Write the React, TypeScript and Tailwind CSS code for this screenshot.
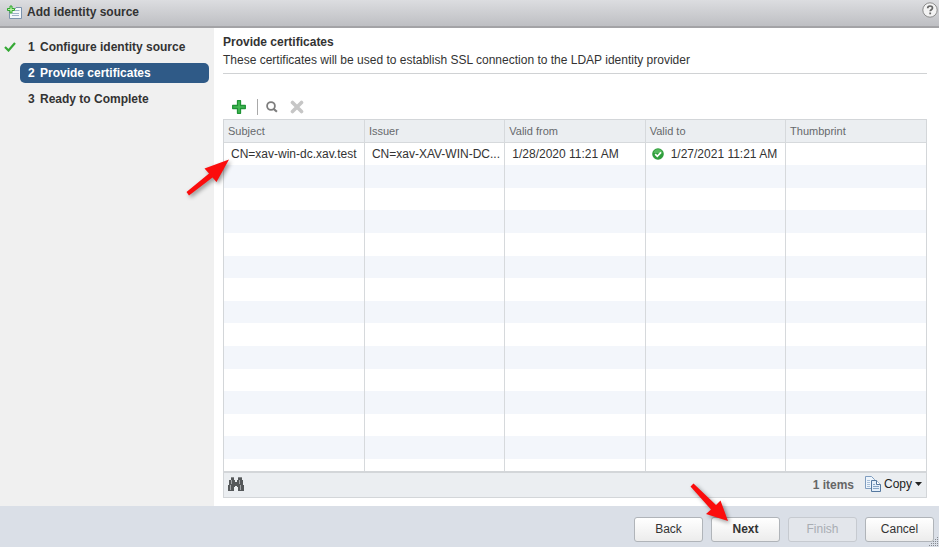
import React from "react";

const columns = ["Subject", "Issuer", "Valid from", "Valid to", "Thumbprint"];
const emptyRows = Array.from({ length: 13 }, (_, i) => i);

function AddSourceIcon() {
  return (
    <svg width="17" height="15" viewBox="0 0 17 15" aria-hidden="true">
      <path d="M3.5 4.500h5l1.500-2h5.500v11h-12z" fill="#f4f7fa" stroke="#7c93ad" />
      <path d="M9 5.500h4.500M6 8.500h7M6 10.500h7" stroke="#9fb2c8" />
      <path d="M4 1h2v2.500h2.500v2H6V8H4V5.500H1.500v-2H4z" fill="#b9f2a6" stroke="#2fa52f" />
    </svg>
  );
}

function HelpIcon() {
  return (
    <svg width="16" height="16" viewBox="0 0 16 16" aria-hidden="true">
      <circle cx="8" cy="8" r="7.200" fill="#f3f3f3" stroke="#8d8d8d" strokeWidth="1" />
      <path d="M5.700 6.300c0-3 4.800-3 4.800-.3 0 1.700-2.300 1.700-2.300 3.300" fill="none" stroke="#666" strokeWidth="1.700" />
      <path d="M7.300 10.500h1.800v1.800h-1.800z" fill="#666" />
    </svg>
  );
}

function PlusIcon() {
  return (
    <svg width="14" height="14" viewBox="0 0 14 14" aria-hidden="true">
      <path
        d="M5.500 .7h3v4.800h4.800v3H8.500v4.800h-3V8.500H.7v-3h4.800z"
        fill="#45b954"
        stroke="#1f9436"
        strokeWidth="1.300"
        strokeLinejoin="round"
      />
    </svg>
  );
}

function SearchIcon() {
  return (
    <svg width="12" height="12" viewBox="0 0 12 12" fill="none" stroke="#7d7d7d" aria-hidden="true">
      <circle cx="5" cy="5" r="3.900" strokeWidth="1.800" />
      <path d="M7.500 7.800l3.400 3" strokeWidth="2.200" />
    </svg>
  );
}

function RemoveIcon() {
  return (
    <svg width="14" height="14" viewBox="0 0 14 14" aria-hidden="true">
      <path d="M2.500 2.500l9 9M11.500 2.500l-9 9" stroke="#c6c6c6" strokeWidth="3.600" strokeLinecap="round" />
    </svg>
  );
}

function ValidIcon() {
  return (
    <svg width="12" height="12" viewBox="0 0 12 12" aria-hidden="true" className="shrink-0">
      <circle cx="6" cy="6" r="5.800" fill="#2f9e3c" />
      <path d="M1.500 5a4.600 4.600 0 0 1 9 0z" fill="#55b85c" />
      <path d="M3.200 6.100l2.100 2.200 3.700-4" fill="none" stroke="#fff" strokeWidth="1.700" />
    </svg>
  );
}

function BinocularsIcon() {
  return (
    <svg width="16" height="14" viewBox="0 0 16 14" aria-hidden="true">
      <path d="M3 0h3v3h1v2h2V3h1V0h4v3h1v5h1v6h-6v-4H9v-1H7v1H6v4H0V8h1V3h2z" fill="#55585a" />
      <path d="M3 3h1v4H3zM2 8h1v5H2zM11 3h1v4h-1zM12 8h1v5h-1z" fill="#a2a5a8" />
      <path d="M3 0h3v1H3zM10 0h4v1h-4z" fill="#85888a" />
    </svg>
  );
}

function CopyIcon() {
  return (
    <svg width="16" height="16" viewBox="0 0 16 16" aria-hidden="true">
      <path d="M.5 .5h6l3 3v9h-9z" fill="#eef5fc" stroke="#7f9dbf" />
      <path d="M2 4.500h3M2 6.500h3M2 8.500h3M2 10.500h3" stroke="#a8bfd8" />
      <path d="M6.500 4.500h5l4 4v7h-9z" fill="#e4effa" stroke="#55789f" />
      <path d="M11.500 4.500v4h4" fill="#fff" stroke="#55789f" />
      <path d="M8 8.500h2M8 10.500h6M8 12.500h6" stroke="#88a6c6" />
    </svg>
  );
}

function ResizeGrip() {
  return (
    <svg width="10" height="10" viewBox="0 0 10 10" fill="#85898f" aria-hidden="true" className="absolute right-0 bottom-0">
      <path d="M8 0h1v1H8zM6 2h1v1H6zM8 2h1v1H8zM4 4h1v1H4zM6 4h1v1H6zM8 4h1v1H8zM2 6h1v1H2zM4 6h1v1H4zM6 6h1v1H6zM8 6h1v1H8zM0 8h1v1H0zM2 8h1v1H2zM4 8h1v1H4zM6 8h1v1H6zM8 8h1v1H8z" />
    </svg>
  );
}

const footerButton =
  "h-[25px] w-[69px] rounded-[3px] border border-[#b0b4b9] bg-linear-to-b from-white to-[#ececec] text-[12px] text-[#333]";

export default function App() {
  return (
    <div className="flex min-h-screen flex-col bg-white font-['Liberation_Sans',Arial,sans-serif] text-[12px] leading-4 text-[#333]">
      <header className="flex h-7 items-start justify-between border-b-2 border-[#a3a3a6] bg-linear-to-b from-[#dcdde0] to-[#bebfc3] pr-px pl-[6px]">
        <div className="flex items-center gap-1 pt-1">
          <AddSourceIcon />
          <h1 className="font-bold">Add identity source</h1>
        </div>
        <button type="button" aria-label="Help" className="pt-[2px]">
          <HelpIcon />
        </button>
      </header>

      <div className="flex grow">
        <nav className="w-[214px] shrink-0 bg-[#f0f0f0] pt-[9px] font-bold" aria-label="Steps">
          <ol className="flex flex-col gap-[6px]">
            <li className="flex h-5 items-center pl-1">
              <svg width="12" height="10" viewBox="0 0 12 10" aria-hidden="true">
                <path d="M1 5l3.500 3.500L11 1" fill="none" stroke="#35a935" strokeWidth="2.200" />
              </svg>
              <a href="#configure" className="flex pl-3">
                <span className="w-3">1</span>
                <span>Configure identity source</span>
              </a>
            </li>
            <li className="mr-[5px] ml-5">
              <a href="#certificates" aria-current="step" className="flex h-5 items-center rounded-[5px] bg-[#2f5a87] pl-2 text-white">
                <span className="w-3">2</span>
                <span>Provide certificates</span>
              </a>
            </li>
            <li className="flex h-5 items-center pl-7">
              <a href="#complete" className="flex">
                <span className="w-3">3</span>
                <span>Ready to Complete</span>
              </a>
            </li>
          </ol>
        </nav>

        <main className="relative flex min-w-0 grow flex-col pt-[6px] pr-3 pb-2 pl-[9px]">
          <h2 className="font-bold">Provide certificates</h2>
          <p className="border-b border-[#d0d2d4] pt-[2px] pb-[5px]">
            These certificates will be used to establish SSL connection to the LDAP identity provider
          </p>

          <div className="flex h-[45px] items-end pb-1 pl-[9px]">
            <button type="button" aria-label="Add certificate" className="flex h-4 items-center">
              <PlusIcon />
            </button>
            <span className="mr-2 ml-[11px] h-4 w-px bg-[#a9a9a9]" />
            <button type="button" aria-label="View certificate" className="flex h-4 items-center">
              <SearchIcon />
            </button>
            <button type="button" aria-label="Remove certificate" disabled className="ml-3 flex h-4 items-center">
              <RemoveIcon />
            </button>
          </div>

          <div className="flex grow flex-col border border-[#d3d6d9]">
            <div className="relative grow">
              <table className="absolute inset-0 h-full w-full table-fixed border-collapse text-left">
                <thead>
                  <tr className="h-[22px] bg-[#ebeef1] text-[11px] text-[#66696c]">
                    {columns.map((name) => (
                      <th key={name} scope="col" className="border-r border-b border-[#d6d9dc] py-0 pl-1 font-normal last:border-r-0">
                        {name}
                      </th>
                    ))}
                  </tr>
                </thead>
                <tbody>
                  <tr>
                    <td className="truncate border-r border-[#d6d9dc] pl-[7px]">CN=xav-win-dc.xav.test</td>
                    <td className="truncate border-r border-[#d6d9dc] pl-[7px]">CN=xav-XAV-WIN-DC...</td>
                    <td className="truncate border-r border-[#d6d9dc] pl-[7px]">1/28/2020 11:21 AM</td>
                    <td className="truncate border-r border-[#d6d9dc] pl-[6px]">
                      <span className="flex items-center gap-[7px]">
                        <ValidIcon />
                        1/27/2021 11:21 AM
                      </span>
                    </td>
                    <td>&nbsp;</td>
                  </tr>
                  {emptyRows.map((row) => (
                    <tr key={row} className="odd:bg-white even:bg-[#f3f6fb]">
                      {columns.map((name) => (
                        <td key={name} className="border-r border-[#d6d9dc] last:border-r-0">&nbsp;</td>
                      ))}
                    </tr>
                  ))}
                  <tr className="h-3">
                    {columns.map((name) => (
                      <td key={name} className="border-r border-[#d6d9dc] last:border-r-0" />
                    ))}
                  </tr>
                </tbody>
              </table>
            </div>
            <div className="flex h-[26px] shrink-0 items-center border-t-2 border-[#d3d6d9] bg-[#ebeef1] px-1 pb-[2px]">
              <button type="button" aria-label="Find">
                <BinocularsIcon />
              </button>
              <span className="ml-auto pt-[2px] font-bold text-[#666]">1 items</span>
              <button type="button" className="ml-[11px] flex items-center text-[#222]">
                <CopyIcon />
                <span className="pl-[3px]">Copy</span>
                <svg width="7" height="4" viewBox="0 0 7 4" aria-hidden="true" className="ml-[3px]">
                  <path d="M0 0h7L3.500 4z" fill="#222" />
                </svg>
              </button>
            </div>
          </div>

          <svg
            width="50"
            height="44"
            viewBox="0 0 50 44"
            aria-hidden="true"
            className="absolute top-[128px] -left-[30px] drop-shadow-[2px_2px_2px_rgba(0,0,0,0.4)]"
          >
            <path d="M2.500 36L25 17.500 20.500 12.500 45 3.500 32.500 26 28.500 21.500 5 39.500z" fill="#fb0d0d" />
          </svg>
        </main>
      </div>

      <footer className="relative flex h-[41px] items-center justify-end gap-2 bg-[#dadfe7] pt-[5px] pr-[5px]">
        <button type="button" className={footerButton}>Back</button>
        <div className="relative flex">
          <button type="button" className={`${footerButton} font-bold`}>Next</button>
          <svg
            width="42"
            height="44"
            viewBox="0 0 42 44"
            aria-hidden="true"
            className="absolute -top-[36px] -left-[22px] drop-shadow-[2px_2px_2px_rgba(0,0,0,0.4)]"
          >
            <path d="M4.500 2.500L27 24 31.500 19.500 39 40 17 33 22 28.500 1.500 5.500z" fill="#fb0d0d" />
          </svg>
        </div>
        <button
          type="button"
          disabled
          className="h-[25px] w-[69px] rounded-[3px] border border-[#c6cad0] bg-[#e3e6eb] text-[12px] text-[#a9adb3]"
        >
          Finish
        </button>
        <button type="button" className={footerButton}>Cancel</button>
        <ResizeGrip />
      </footer>
    </div>
  );
}
